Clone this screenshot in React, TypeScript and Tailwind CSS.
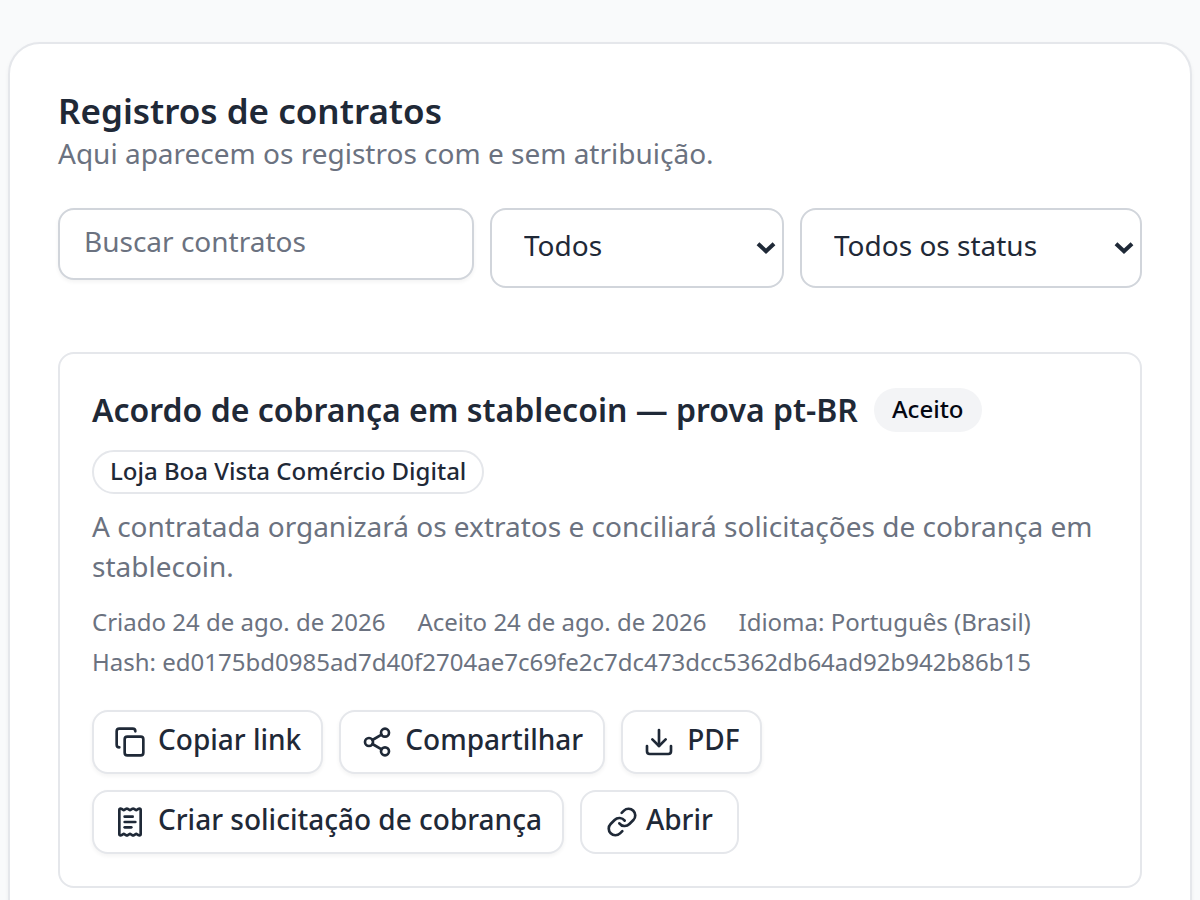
import { useState, type ReactNode } from "react";
import { Copy, Download, Link, ReceiptText, Share2 } from "lucide-react";

const CONTRACTS = [
  {
    title: "Acordo de cobrança em stablecoin — prova pt-BR",
    status: "Aceito",
    merchant: "Loja Boa Vista Comércio Digital",
    summary: "A contratada organizará os extratos e conciliará solicitações de cobrança em stablecoin.",
    created: "24 de ago. de 2026",
    accepted: "24 de ago. de 2026",
    language: "Português (Brasil)",
    hash: "ed0175bd0985ad7d40f2704ae7c69fe2c7dc473dcc5362db64ad92b942b86b15",
  },
];

function FilterSelect({
  label,
  options,
  className,
}: {
  label: string;
  options: string[];
  className: string;
}) {
  return (
    <div className={`relative ${className}`}>
      <select
        aria-label={label}
        className="h-20 w-full appearance-none rounded-2xl border-2 border-[#d1d5db] bg-white pr-10 pb-1.5 pl-8 text-[28px]"
      >
        {options.map((option) => (
          <option key={option}>{option}</option>
        ))}
      </select>
      <svg
        viewBox="0 0 20 12"
        className="pointer-events-none absolute top-[34px] right-2 h-3 w-5"
        fill="none"
        stroke="currentColor"
        strokeWidth="4"
        aria-hidden="true"
      >
        <path d="M2 1.7 10 9.2 18 1.7" />
      </svg>
    </div>
  );
}

function ActionButton({ icon, children }: { icon: ReactNode; children: ReactNode }) {
  return (
    <button
      type="button"
      className="inline-flex h-16 items-center gap-3 rounded-2xl border-2 border-[#e5e7eb] bg-white px-5 text-[28px] leading-10 font-medium shadow-[0_2px_4px_rgba(0,0,0,0.05)]"
    >
      {icon}
      <span className="pb-1.5">{children}</span>
    </button>
  );
}

export default function App() {
  const [query, setQuery] = useState("");

  return (
    <main className="min-h-screen bg-[#f9fafb] px-2 pt-[42px] font-['Noto_Sans',sans-serif] text-[#1f2937]">
      <section className="rounded-[32px] border-2 border-[#e5e7eb] bg-white p-12 shadow-[0_2px_4px_rgba(0,0,0,0.05)]">
        <h1 className="text-[35px] leading-[38px] font-semibold">Registros de contratos</h1>
        <p className="text-[28px] leading-[46px] text-[#6b7280]">
          Aqui aparecem os registros com e sem atribuição.
        </p>

        {/* Filters */}
        <div className="mt-8 flex items-start gap-4">
          <input
            type="text"
            aria-label="Buscar contratos"
            placeholder="Buscar contratos"
            value={query}
            onChange={(e) => setQuery(e.target.value)}
            className="h-[72px] min-w-0 flex-1 rounded-2xl border-2 border-[#d1d5db] bg-white px-6 pb-1.5 text-[28px] shadow-[0_2px_4px_rgba(0,0,0,0.05)] placeholder:text-[#6b7280]"
          />
          <FilterSelect
            label="Atribuição"
            options={["Todos", "Atribuídos", "Sem atribuição"]}
            className="w-[294px]"
          />
          <FilterSelect
            label="Status"
            options={["Todos os status", "Pendente", "Aceito"]}
            className="w-[342px]"
          />
        </div>

        {/* Contract list */}
        <div className="mt-16 space-y-8">
          {CONTRACTS.map((c) => (
            <article key={c.hash} className="rounded-2xl border-2 border-[#e5e7eb] p-8">
              <div className="flex flex-wrap items-center gap-4">
                <h2 className="text-[32px] leading-12 font-semibold">{c.title}</h2>
                <span className="inline-flex h-11 items-center rounded-full bg-[#f3f4f6] px-[18px] pb-0.5 text-2xl font-medium text-[#030712]">
                  {c.status}
                </span>
                <span className="inline-flex h-11 items-center rounded-full border-2 border-[#e5e7eb] px-4 pb-0.5 text-2xl font-medium">
                  {c.merchant}
                </span>
              </div>

              <p className="mt-3 text-[28px] leading-10 text-[#6b7280]">{c.summary}</p>

              <div className="mt-5 flex flex-wrap gap-x-8 gap-y-2 text-2xl text-[#6b7280]">
                <span>Criado {c.created}</span>
                <span>Aceito {c.accepted}</span>
                <span>Idioma: {c.language}</span>
                <span className="break-all">Hash: {c.hash}</span>
              </div>

              <div className="mt-8 flex flex-wrap gap-4">
                <ActionButton icon={<Copy className="size-8" />}>Copiar link</ActionButton>
                <ActionButton icon={<Share2 className="size-8" />}>Compartilhar</ActionButton>
                <ActionButton icon={<Download className="size-8" />}>PDF</ActionButton>
                <ActionButton icon={<ReceiptText className="size-8" />}>
                  Criar solicitação de cobrança
                </ActionButton>
                <a
                  href="#abrir"
                  className="inline-flex h-16 items-center gap-2 rounded-2xl border-2 border-[#e5e7eb] bg-white px-6 text-[28px] leading-10 font-medium"
                >
                  <Link className="size-8" />
                  <span className="pb-1.5">Abrir</span>
                </a>
              </div>
            </article>
          ))}
        </div>
      </section>
    </main>
  );
}
